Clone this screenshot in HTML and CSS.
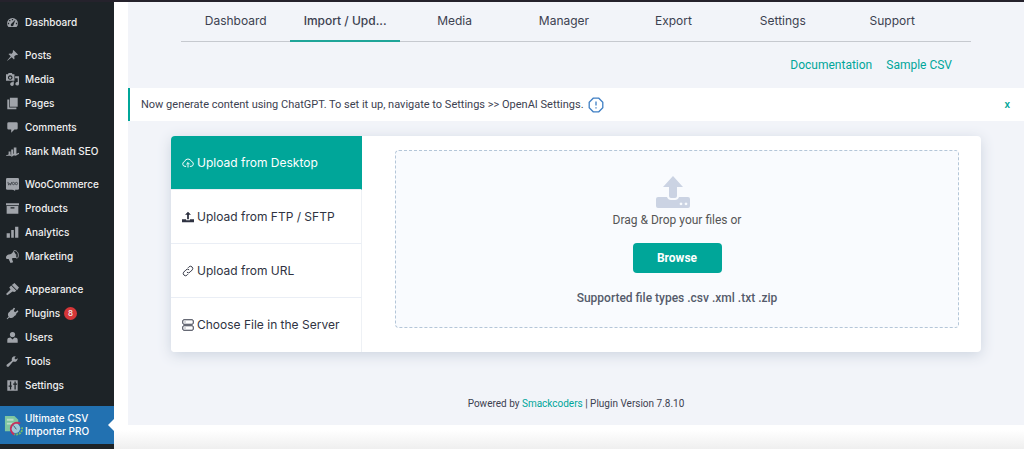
FILE: index.html
```html
<!DOCTYPE html>
<html lang="en">
<head>
<meta charset="utf-8">
<title>Ultimate CSV Importer PRO</title>
<link rel="stylesheet" href="styles.css">
</head>
<body>
<div class="app">
  <nav class="sidebar" aria-label="Admin menu">
    <div class="menu-group">
      <a class="menu-item" href="#"><svg class="menu-icon" viewBox="0 0 20 20"><path fill-rule="evenodd" d="M3.8 17A8.4 8.4 0 1 1 16.2 17ZM9 4.500h2v2H9ZM4.800 6.200h2v2h-2ZM2.800 10.500h2v2h-2ZM15.200 10.500h2v2h-2ZM14.700 5.500 8.600 11.700a2.100 2.100 0 1 0 2.900 2.200Z"/></svg>Dashboard</a>
    </div>
    <div class="menu-group">
      <a class="menu-item" href="#"><svg class="menu-icon" viewBox="0 0 20 20"><path d="M10.400 3.000l1-1.400 7 7-1.400 1c-1-.6-1.900-.5-2.800.4l-1.800 1.900c1 1.500.9 3.000-.1 4.300L8.800 12.700 2.200 18.200 1.800 17.800 7.300 11.200 3.800 7.700c1.300-1 2.800-1.100 4.300-.1L10 5.800c.9-.9 1-1.800.4-2.800Z"/></svg>Posts</a>
      <a class="menu-item" href="#"><svg class="menu-icon" viewBox="0 0 20 20"><path fill-rule="evenodd" d="M0 2h3l1-2h5l1 2h3v10H0ZM6.500 3.500a3.500 3.500 0 1 0 .01 0ZM6.500 5.200a1.800 1.800 0 1 1-.01 0ZM14 5h6v11.500a2.800 2.800 0 1 1-2-2.600V8h-4ZM10 13h2v4a2.800 2.800 0 1 1-2-2.600Z"/></svg>Media</a>
      <a class="menu-item" href="#"><svg class="menu-icon" viewBox="0 0 20 20"><path d="M6 1h12v14H6ZM2 4h3v12h11v3H2Z"/></svg>Pages</a>
      <a class="menu-item" href="#"><svg class="menu-icon" viewBox="0 0 20 20"><path d="M4 2h12q2 0 2 2v7q0 2-2 2h-3l-5 5v-5H4q-2 0-2-2V4q0-2 2-2Z"/></svg>Comments</a>
      <a class="menu-item" href="#"><svg class="menu-icon" viewBox="0 0 20 20"><path d="M4 10h3v6H4ZM8 7h3v9H8ZM12 4h4v12h-4Z"/><path d="M0 16 6 14l3 2 4-4 2 2 5-2v2l-5 2-2-1-4 3-3-2-6 1Z"/></svg>Rank Math SEO</a>
    </div>
    <div class="menu-group">
      <a class="menu-item" href="#"><svg class="menu-icon" viewBox="0 0 20 20"><rect x="0" y="0" width="20" height="18" rx="2"/><path d="m9 17 5 3v-3Z"/><path class="menu-ink" d="M3 6l1 5 2-3 1 3 2-5"/><circle class="menu-ink" cx="11.500" cy="8.500" r="1.800"/><circle class="menu-ink" cx="16" cy="8.500" r="1.800"/></svg>WooCommerce</a>
      <a class="menu-item" href="#"><svg class="menu-icon" viewBox="0 0 20 20"><path fill-rule="evenodd" d="M0 2h20v3H0ZM1 6h18v12H1ZM7 8v2h6V8Z"/></svg>Products</a>
      <a class="menu-item" href="#"><svg class="menu-icon" viewBox="0 0 20 20"><path d="M1 11h5v7H1ZM8 6h4v12H8ZM14 1h5v17h-5Z"/></svg>Analytics</a>
      <a class="menu-item" href="#"><svg class="menu-icon" viewBox="0 0 20 20"><path d="M12 1 17 13c-3-1-5-1-8 0l2 6-4 1-3-6-3 0C-1 12 0 8 4 7c4-1 6-2 8-6Z"/><path class="menu-line" d="M12 1c4-1 7 3 7 7 0 2 0 3-2 5M12 5c2 0 4 2 3 4"/></svg>Marketing</a>
    </div>
    <div class="menu-group">
      <a class="menu-item" href="#"><svg class="menu-icon" viewBox="0 0 20 20"><path d="M9 3 13 0l7 7-3 4ZM8 4l8 8-3 2-3-1-8 6-2-2 7-7-2-3Z"/></svg>Appearance</a>
      <a class="menu-item" href="#"><svg class="menu-icon" viewBox="0 0 20 20"><path d="m12 1 2 1-2 4 2 2 4-3 1 2-4 4 1 1-3 2c-2 3-5 4-8 2l-3 3-1-1 3-3C2 12 3 9 6 7l2-3 1 1Z"/></svg>Plugins<span class="badge">8</span></a>
      <a class="menu-item" href="#"><svg class="menu-icon" viewBox="0 0 20 20"><circle cx="10" cy="5.500" r="4"/><path d="M2 18v-4c0-3 2-4 5-4l3 3 3-3c3 0 5 1 5 4v4Z"/></svg>Users</a>
      <a class="menu-item" href="#"><svg class="menu-icon" viewBox="0 0 20 20"><path d="M17 8c-1 2-3 3-6 2l-7 8c-2 1-4-1-3-3l8-6c-1-4 1-7 5-7h1l-2 3 2 2 3-2c0 1 0 2-1 3Z"/></svg>Tools</a>
      <a class="menu-item" href="#"><svg class="menu-icon" viewBox="0 0 20 20"><path fill-rule="evenodd" d="M2 2h16v16H2ZM6 4v6H4v2h2v4h2v-4h1v-2H8V4ZM13 4v3h-2v2h2v7h2V9h2V7h-2V4Z"/></svg>Settings</a>
    </div>
    <a class="menu-item menu-item-current" href="#" aria-current="page">
      <svg class="plugin-logo" viewBox="0 0 20 22"><path fill="#7fc6a0" d="M1 1h10l4 4v12H1Z"/><path fill="#b9dfca" d="M3 4h7v2H3ZM3 8h8v2H3Z"/><circle cx="12" cy="14" r="5" fill="#9fc9d8"/><path fill="none" stroke="#c5305d" stroke-width="2" d="M17 9a6.500 6.500 0 1 0-6 11.500"/><path fill="none" stroke="#79bf65" stroke-width="2" stroke-dasharray="2 1" d="M19 13a6 6 0 0 1-8 7"/><path stroke="#3e5970" d="m13 15-3-4"/></svg>
      <span>Ultimate CSV Importer PRO</span>
    </a>
  </nav>

  <div class="content">
    <main class="panel">
      <nav class="tabs" aria-label="Importer">
        <a class="tab" href="#">Dashboard</a>
        <a class="tab tab-active" href="#" aria-current="page">Import / Upd...</a>
        <a class="tab" href="#">Media</a>
        <a class="tab" href="#">Manager</a>
        <a class="tab" href="#">Export</a>
        <a class="tab" href="#">Settings</a>
        <a class="tab" href="#">Support</a>
      </nav>
      <div class="help-links">
        <a href="#">Documentation</a>
        <a href="#">Sample CSV</a>
      </div>
      <div class="notice">
        <p>Now generate content using ChatGPT. To set it up, navigate to Settings &gt;&gt; OpenAI Settings.</p>
        <svg class="notice-icon" viewBox="0 0 16 16"><path d="M5.200 1.200h5.600l4 4v5.600l-4 4H5.200l-4-4V5.200ZM8 4.500v4M8 10.300v1.200"/></svg>
        <button class="notice-close" type="button" aria-label="Close">x</button>
      </div>
      <section class="card">
        <div class="sources">
          <button class="source source-active" type="button"><svg class="source-icon" viewBox="0 0 16 16"><path d="M5.500 12.500H4A3.200 3.200 0 0 1 3.400 6.200 4.800 4.800 0 0 1 12.600 6 3.300 3.300 0 0 1 12 12.500h-1.500M8 14V7.500M5.800 9.700 8 7.500l2.200 2.200"/></svg>Upload from Desktop</button>
          <button class="source" type="button"><svg class="source-icon source-icon-solid" viewBox="0 0 16 16"><path d="M8 1 4 5h2.800v6h2.400V5H12ZM0 11h5.500v1.300h5V11H16v4H0Z"/></svg>Upload from FTP / SFTP</button>
          <button class="source" type="button"><svg class="source-icon" viewBox="0 0 16 16"><path d="M6.500 9.500a3 3 0 0 0 4.200 0l3-3a3 3 0 0 0-4.200-4.200L8 3.800M9.500 6.500a3 3 0 0 0-4.200 0l-3 3a3 3 0 0 0 4.200 4.200L8 12.200"/></svg>Upload from URL</button>
          <button class="source" type="button"><svg class="source-icon" viewBox="0 0 16 16"><rect x="1" y="1" width="14" height="6" rx="1.500"/><rect x="1" y="9" width="14" height="6" rx="1.500"/><path d="M3.500 4h1M3.500 12h1"/></svg>Choose File in the Server</button>
        </div>
        <div class="upload">
          <div class="dropzone">
            <svg class="drop-icon" viewBox="0 0 34 32"><path fill-rule="evenodd" d="M17 0 27 11h-6v9q0 2-2 2h-4q-2 0-2-2v-9H7ZM2 21h9q1 3 4 3h4q3 0 4-3h9q2 0 2 2v7q0 2-2 2H2q-2 0-2-2v-7q0-2 2-2ZM25 26.500a1.400 1.400 0 1 0 .01 0ZM30 26.500a1.400 1.400 0 1 0 .01 0Z"/></svg>
            <p class="drop-text">Drag &amp; Drop your files or</p>
            <button class="browse" type="button">Browse</button>
            <p class="file-types">Supported file types .csv .xml .txt .zip</p>
          </div>
        </div>
      </section>
      <footer class="footer">Powered by <a href="#">Smackcoders</a> | Plugin Version 7.8.10</footer>
    </main>
  </div>
</div>
</body>
</html>
```
FILE: styles.css
```css
* {
  box-sizing: border-box;
}

body {
  margin: 0;
  font-family: Roboto, "Liberation Sans", sans-serif;
  font-size: 12px;
  line-height: 16px;
  color: #3c4150;
}

p {
  margin: 0;
}

a {
  color: #00a699;
  text-decoration: none;
}

button {
  border: 0;
  padding: 0;
  font: inherit;
  cursor: pointer;
}

.app {
  display: flex;
  min-height: 100vh;
  border-top: 2px solid #25222c;
}

.sidebar {
  display: flex;
  flex-direction: column;
  flex: none;
  gap: 9px;
  width: 114px;
  padding: 8px 0 4px;
  background: #1d2327;
}

.menu-item {
  display: flex;
  align-items: center;
  gap: 6px;
  height: 24px;
  padding-left: 6px;
  font-family: Inter, "Liberation Sans", sans-serif;
  font-size: 10px;
  font-weight: 500;
  color: #f0f0f1;
  white-space: nowrap;
}

.menu-icon {
  flex: none;
  width: 13px;
  height: 13px;
  fill: #a0a4aa;
}

.menu-ink {
  fill: none;
  stroke: #454a50;
  stroke-width: 1.5;
}

.menu-line {
  fill: none;
  stroke: #a0a4aa;
  stroke-width: 1.5;
}

.badge {
  width: 13px;
  height: 13px;
  margin-left: -2px;
  border-radius: 50%;
  background: #d63638;
  font-size: 8px;
  line-height: 13px;
  text-align: center;
}

.menu-item-current {
  position: relative;
  gap: 2px;
  height: auto;
  padding: 6px 0 6px 4px;
  background: #2271b1;
  line-height: 13px;
  color: #fff;
  white-space: normal;
}

.menu-item-current span {
  width: 72px;
}

.menu-item-current::after {
  content: "";
  position: absolute;
  top: 50%;
  right: 0;
  margin-top: -6px;
  border: 6px solid transparent;
  border-left-width: 0;
  border-right-color: #fff;
}

.plugin-logo {
  flex: none;
  width: 19px;
  height: 21px;
}

.content {
  flex: 1;
  min-width: 0;
  padding: 0 0 25px 14px;
  background: linear-gradient(to top, #eeeeee, #ffffff 20px);
}

.panel {
  padding-bottom: 13px;
  background: #f2f4f9;
}

.tabs {
  display: flex;
  margin: 0 53px;
  padding-right: 24px;
  border-bottom: 1px solid #c6c9cf;
}

.tab {
  flex: 1;
  margin-bottom: -1px;
  padding: 9px 0 10px;
  border-bottom: 2px solid transparent;
  font-family: Inter, "Liberation Sans", sans-serif;
  font-size: 12px;
  line-height: 19px;
  text-align: center;
  color: #3c4150;
}

.tab-active {
  border-bottom-color: #1fa599;
  font-weight: 500;
}

.help-links {
  display: flex;
  justify-content: flex-end;
  gap: 14px;
  padding: 15px 72px 15px 0;
}

.notice {
  display: flex;
  align-items: center;
  gap: 4px;
  height: 33px;
  padding: 0 14px 0 11px;
  border-left: 2px solid #00a699;
  background: #fff;
  font-size: 11px;
}

.notice-icon {
  width: 16px;
  height: 16px;
  fill: none;
  stroke: #3f7fc4;
  stroke-width: 1.3;
}

.notice-close {
  margin-left: auto;
  background: none;
  font-weight: 500;
  color: #00a699;
}

.card {
  display: flex;
  margin: 15px 43px 0;
  border-radius: 4px;
  background: #fff;
  box-shadow: 0 3px 14px #ccd4df;
  overflow: hidden;
}

.sources {
  flex: none;
  width: 191px;
}

.source {
  display: flex;
  align-items: center;
  gap: 3px;
  width: 100%;
  height: 54px;
  padding-left: 11px;
  border-right: 1px solid #eef1f5;
  border-bottom: 1px solid #eaeef5;
  background: #fff;
  font-family: Inter, "Liberation Sans", sans-serif;
  font-size: 12px;
  color: #2f3342;
}

.source:last-child {
  border-bottom: 0;
}

.source-active {
  border-right-color: #00a699;
  background: #00a699;
  color: #fff;
}

.source-icon {
  width: 12px;
  height: 12px;
  fill: none;
  stroke: currentColor;
  stroke-width: 1.3;
}

.source-icon-solid {
  fill: currentColor;
  stroke: none;
}

.upload {
  flex: 1;
  padding: 14px 22px 24px 33px;
}

.dropzone {
  display: flex;
  flex-direction: column;
  align-items: center;
  height: 100%;
  padding-top: 25px;
  border: 1px dashed #b4c6d8;
  border-radius: 4px;
  background: #f9fbfe;
}

.drop-icon {
  width: 34px;
  height: 32px;
  margin-right: 8px;
  fill: #cbd3e3;
}

.drop-text {
  margin-top: 4px;
  color: #555;
}

.browse {
  width: 89px;
  height: 30px;
  margin: 15px 0 17px;
  border-radius: 4px;
  background: #00a699;
  font-weight: 700;
  color: #fff;
}

.file-types {
  font-weight: 500;
  color: #555b6b;
}

.footer {
  padding-top: 44px;
  font-size: 10px;
  text-align: center;
}
```
